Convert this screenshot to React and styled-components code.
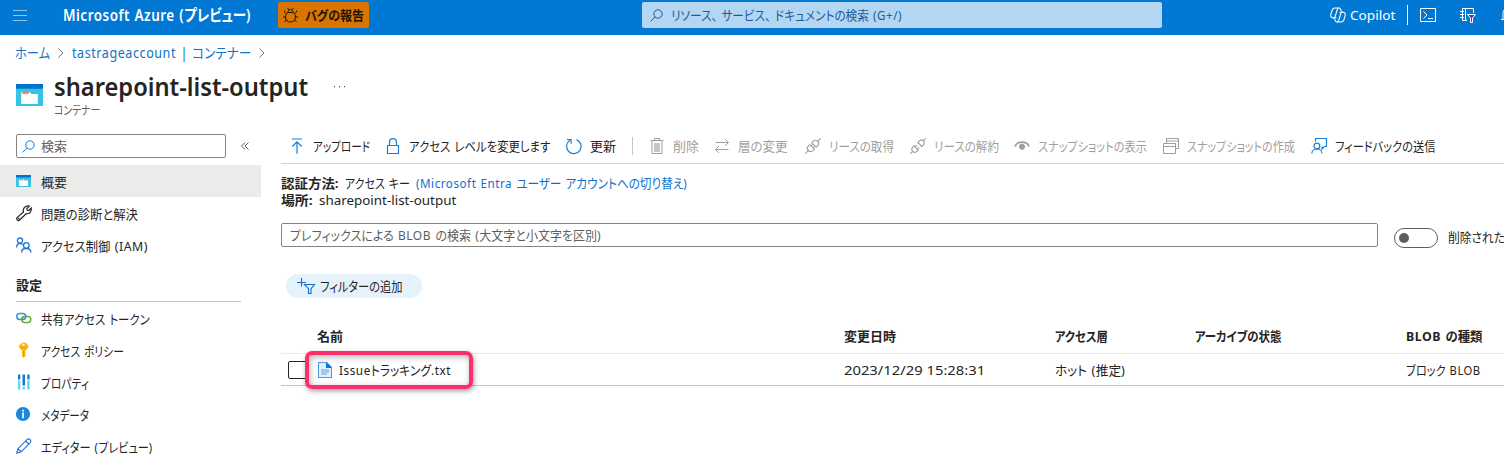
import React, { useLayoutEffect, useRef, useState } from "react";
import styled, { createGlobalStyle } from "styled-components";

const Global = createGlobalStyle`
  * { box-sizing: border-box; }
  body {
    margin: 0;
    background: #fff;
    color: #252423;
    font: 13px/16px "Noto Sans", "Noto Sans CJK JP", sans-serif;
    font-feature-settings: "palt";
    overflow: hidden;
  }
`;

/* Condenses or widens a label to the width reserved for it. */
const FitBox = styled.span`
  display: inline-block;
  flex: none;
  width: ${(p) => p.$w}px;
  white-space: nowrap;
`;
const FitInner = styled.span`
  display: inline-block;
  transform-origin: 0 50%;
`;
/* Latin runs are set a little wider than the kana around them. */
const Latin = styled.span`
  letter-spacing: 0.6px;
  word-spacing: 0.6px;
`;
const LATIN_RUN = /([ -~]+)/;
function Fit({ w, children }) {
  const ref = useRef(null);
  const [scale, setScale] = useState(1);
  useLayoutEffect(() => {
    setScale(w / ref.current.offsetWidth);
  }, [w, children]);
  const runs = children.split(LATIN_RUN).filter(Boolean);
  return (
    <FitBox $w={w}>
      <FitInner ref={ref} style={{ transform: `scaleX(${scale})` }}>
        {runs.length < 2
          ? children
          : runs.map((run, i) => (LATIN_RUN.test(run) ? <Latin key={i}>{run}</Latin> : run))}
      </FitInner>
    </FitBox>
  );
}

const Icon = styled.svg.attrs((p) => ({ fill: "none", stroke: p.stroke || "currentColor" }))`
  display: block;
  flex: none;
  width: ${(p) => p.$w || 16}px;
  height: ${(p) => p.$h || p.$w || 16}px;
  overflow: visible;
`;

const Page = styled.div`
  width: 1504px;
  height: 472px;
  overflow: hidden;
  background: #fff;
`;

/* top bar */
const TopBar = styled.header`
  display: flex;
  height: 35px;
  padding: 2px 0 0 13px;
  background: #0078d4;
  color: #fff;
`;
const TopItem = styled.div`
  display: flex;
  align-items: center;
  flex: none;
  height: 26px;
  margin-left: ${(p) => p.$ml || 0}px;
`;
const Brand = styled(TopItem)`
  font-size: 16px;
  font-weight: 600;
`;
const BugButton = styled.button`
  display: flex;
  align-items: center;
  gap: 7px;
  flex: none;
  width: 91px;
  height: 26px;
  margin-left: 27px;
  padding: 0 0 0 5px;
  border: 0;
  border-radius: 2px;
  background: #d97500;
  color: #201400;
  font: inherit;
  font-weight: 600;
`;
const GlobalSearch = styled.div`
  display: flex;
  align-items: center;
  gap: 8px;
  flex: none;
  width: 520px;
  height: 26px;
  margin-left: 273px;
  padding-left: 8px;
  border-radius: 2px;
  background: #b3d6f2;
  color: #1c5c99;
`;
const TopDivider = styled.div`
  flex: none;
  width: 1px;
  height: 20px;
  margin: 3px 12px 0 12px;
  background: #fff;
`;

/* title area */
const Crumbs = styled.nav`
  display: flex;
  align-items: center;
  height: 36px;
  padding-left: 15px;
  color: #0f73c7;
  font-size: 14px;
`;
const Chevron = styled(Icon)`
  margin: 0 8px;
  color: #76746f;
`;
const TitleRow = styled.div`
  display: flex;
  height: 63px;
  padding-left: 16px;
`;
const TitleIcon = styled.div`
  flex: none;
  padding-top: 13px;
  width: 38px;
`;
const TitleText = styled.div`
  width: 280px;
`;
const Title = styled.h1`
  margin: 0;
  font-size: 25px;
  font-weight: 600;
  line-height: 31px;
`;
const Subtitle = styled.div`
  padding-top: 1px;
  color: #605e5c;
  font-size: 12px;
  line-height: 16px;
`;
const More = styled(Icon)`
  margin-top: 15px;
  color: #484644;
`;

/* body */
const Body = styled.div`
  display: flex;
`;
const Sidebar = styled.aside`
  flex: none;
  width: 261px;
`;
const SideSearchRow = styled.div`
  display: flex;
  align-items: center;
  gap: 15px;
  height: 24px;
  margin: 0 0 7px 16px;
  color: #605e5c;
`;
const SideSearch = styled.div`
  display: flex;
  align-items: center;
  gap: 6px;
  width: 210px;
  height: 24px;
  padding-left: 5px;
  border: 1px solid #85837f;
  border-radius: 2px;
`;
const NavItem = styled.div`
  display: flex;
  align-items: center;
  gap: ${(p) => p.$gap || 9}px;
  height: 32px;
  padding-left: 16px;
  background: ${(p) => (p.$active ? "#edebe9" : "transparent")};
`;
const NavLabel = styled.span`
  padding-top: 2px;
`;
const NavHeading = styled.div`
  width: 225px;
  height: 33px;
  margin: 8px 0 0 16px;
  padding-top: 8px;
  border-bottom: 1px solid #c8c6c4;
  font-weight: 700;
`;
const Main = styled.main`
  flex: none;
  width: 1223px;
  margin-left: 20px;
`;
const Commands = styled.div`
  display: flex;
  align-items: center;
  height: 30px;
  padding-bottom: 6px;
  border-bottom: 1px solid #d2d0ce;
`;
const Command = styled.div`
  display: flex;
  align-items: center;
  gap: 8px;
  flex: none;
  height: 24px;
  margin-left: ${(p) => p.$ml}px;
  color: ${(p) => (p.$disabled ? "#a19f9d" : "#252423")};
`;
const CommandDivider = styled.div`
  width: 1px;
  height: 18px;
  margin-left: 16px;
  background: #c8c6c4;
`;
const Info = styled.div`
  padding-top: 11px;
`;
const InfoRow = styled.div`
  display: flex;
  gap: 6px;
  height: 17px;
  line-height: 17px;
`;
const Strong = styled.span`
  font-weight: 700;
`;
const Link = styled.span`
  color: #0f6fce;
`;
const FilterRow = styled.div`
  display: flex;
  height: 24px;
  margin-top: 14px;
`;
const PrefixInput = styled.div`
  flex: none;
  width: 1097px;
  height: 24px;
  padding: 3px 0 0 8px;
  border: 1px solid #85837f;
  border-radius: 2px;
  color: #605e5c;
`;
const Toggle = styled.div`
  flex: none;
  width: 44px;
  height: 20px;
  margin: 5px 10px 0 16px;
  padding: 4px;
  border: 1px solid #605e5c;
  border-radius: 10px;
`;
const Knob = styled.div`
  width: 10px;
  height: 10px;
  border-radius: 50%;
  background: #605e5c;
`;
const ToggleLabel = styled.div`
  padding-top: 6px;
`;
const AddFilter = styled.div`
  display: flex;
  align-items: center;
  gap: 5px;
  width: 136px;
  height: 24px;
  margin: 27px 0 0 5px;
  padding-left: 11px;
  border-radius: 12px;
  background: #e5f1fb;
`;
const Row = styled.div`
  display: grid;
  grid-template-columns: 563px 211px 140px 211px 98px;
  align-items: center;
  height: ${(p) => p.$h}px;
  border-bottom: 1px solid ${(p) => p.$line};
  padding-bottom: ${(p) => (p.$head ? 2 : 0)}px;
  font-weight: ${(p) => (p.$head ? 700 : 400)};
  margin-top: ${(p) => p.$mt || 0}px;
`;
const NameCell = styled.div`
  position: relative;
  display: flex;
  align-items: center;
  height: 100%;
  padding-left: ${(p) => p.$pl}px;
`;
const Checkbox = styled.span`
  flex: none;
  width: 20px;
  height: 18px;
  margin-right: 10px;
  border: 1px solid #252423;
  border-radius: 2px;
`;
const FileName = styled.span`
  margin-left: 7px;
`;
const Marker = styled.span`
  position: absolute;
  left: 24px;
  top: -3px;
  width: 168px;
  height: 38px;
  border: 4px solid #fb2f6c;
  border-radius: 7px;
  box-shadow: 1px 2px 5px rgba(0, 0, 0, 0.38), inset 1px 2px 6px rgba(0, 0, 0, 0.3);
`;

const SearchIcon = (p) => (
  <Icon $w={13} viewBox="0 0 13 13" {...p}>
    <circle cx="8" cy="5" r="4.2" />
    <path d="M5 8 .7 12.3" />
  </Icon>
);
const ContainerIcon = ({ w, h }) => (
  <Icon $w={w} $h={h} viewBox="0 0 26 22" stroke="none" preserveAspectRatio="none">
    <path fill="#37c2e6" d="M0 4h26v18H0z" />
    <path fill="#0072cf" d="M0 0h26v4.7H0z" />
    <path fill="#fff" d="M5 8h8l2 2h6v10H5z" />
    <path fill="#ef8a45" d="M6 7.4h5.5l1.5 1.4-1.5 1.2H6z" />
  </Icon>
);
const Wrench = () => (
  <Icon viewBox="0 0 16 16" strokeWidth="1.2">
    <path d="M1 12.6 7.5 7c-.8-2.8.6-5.6 4-6.200 .8-.1 1.300 0 1.900 .2L10.800 3.600l.4 1.500 1.600.4 2.400-2.500c.8 3.300-1.500 6.200-5 5.700L3.300 15.200c-1.500 1-3.400-1.100-2.300-2.600z" />
    <circle cx="2.700" cy="13.500" r=".3" />
  </Icon>
);
const People = () => (
  <Icon viewBox="0 0 16 16" stroke="#2275dd" strokeWidth="1.3">
    <circle cx="4" cy="3.600" r="2.600" />
    <path d="M.5 10.500C.6 8 2 6.500 4 6.500c1.200 0 2 .4 2.700 1M5.500 15.500c.1-2.600 1.700-4 4.200-4h1c2.500 0 4.100 1.600 4.300 4" />
    <circle cx="10.300" cy="8.500" r="2.800" />
  </Icon>
);
const Chain = () => (
  <Icon viewBox="0 0 16 16" strokeWidth="1.500">
    <rect x="5.800" y="6.600" width="9" height="5.800" rx="2.900" stroke="#6bb13a" />
    <rect x=".8" y="3.600" width="9" height="5.800" rx="2.900" stroke="#3a8fdd" />
    <path d="M5.900 9.400C6 8 7 6.700 8.600 6.600" stroke="#6bb13a" />
  </Icon>
);
const Key = () => (
  <Icon viewBox="0 0 16 16" stroke="none">
    <path fill="#fcb813" fillRule="evenodd" d="M5 1.800 6.500.5h3L11 1.800l1.300 1.700v2L11 7.300 9.500 8.500v5.700L7.500 15.800 6 14.200V8.500L4.500 7.300 2.900 5.500v-2zM7.500 1.600a1.100 1.100 0 1 0 .01 0z" />
    <path fill="#e89b08" d="M4.800 5h5.500v.9H4.800zM7 9h.8v5H7z" />
  </Icon>
);
const Bars = () => (
  <Icon viewBox="0 0 16 16" stroke="none">
    <path fill="#1479cf" d="M2 .5h2.300v5H2zM6.500.5H9v11H6.500zM11.300.5h2.300v5h-2.300z" />
    <path fill="#58d9f2" d="M2 6.500h2.300v9H2zM6.500 12.700H9v2.800H6.500zM11.300 6.500h2.300v9h-2.300z" />
  </Icon>
);
const InfoIcon = () => (
  <Icon viewBox="0 0 16 16" stroke="none">
    <circle cx="7" cy="8" r="7.100" fill="#1e87dc" />
    <path fill="#fff" d="M6.200 3.700h1.700v1.700H6.200zM6.200 6.500h1.700v5.700H6.200z" />
  </Icon>
);
const Pencil = () => (
  <Icon viewBox="0 0 16 16" stroke="#2971d6" strokeWidth="1.200">
    <path d="M.8 15.200 1.900 10.700 11 1.600c2-2 5 .9 3.300 3L5.200 13.800zM9.700 3l3.300 3.200M2 10.800l3.200 3" />
  </Icon>
);
const FileIcon = () => (
  <Icon $w={14} $h={16} viewBox="0 0 14 16" stroke="none">
    <path fill="#4a9be8" d="M0 0h9l5 5v11H0z" />
    <path fill="#deeffd" d="M1 1h7v5h5v9H1z" />
    <path fill="#1272cf" d="M8 0l6 6H8z" />
    <path fill="#5ea3e5" d="M3 7.500h8v1H3zM3 9.500h8v1H3zM3 11.500h6v1H3z" />
  </Icon>
);

const UploadIcon = () => (
  <Icon viewBox="0 0 16 16" stroke="#1680d8" strokeWidth="1.200">
    <path d="M3 1h10M8 15.800V4M3.300 8.500 8 3.800l4.700 4.700" />
  </Icon>
);
const Lock = () => (
  <Icon viewBox="0 0 16 16" stroke="#1680d8" strokeWidth="1.200">
    <path d="M2.500 7.500h11v8h-11zM4.500 7.500V3.800c0-4.200 7-4.200 7 0v3.700" />
  </Icon>
);
const Refresh = () => (
  <Icon viewBox="0 0 16 16" stroke="#1680d8" strokeWidth="1.200">
    <path d="M10.500 1.600A7.300 7.300 0 1 1 4 2.200M.8 1.500h4.300v4.300" />
  </Icon>
);
const Trash = () => (
  <Icon viewBox="0 0 16 16">
    <path d="M1.500 2.500h13M5.500 2.500v-2h5v2M3 3v12.500h10V3" />
    <path d="M5.500 5.500h5v8h-5z" fill="#c8c6c4" stroke="#c8c6c4" />
  </Icon>
);
const Swap = () => (
  <Icon viewBox="0 0 16 16">
    <path d="M1.500 4.500h13M11 1l3.500 3.500L11 8M14.500 11.500h-13M5 8l-3.500 3.500L5 15" />
  </Icon>
);
const Plug = ({ apart }) => (
  <Icon viewBox="0 0 16 16" strokeWidth="1.100">
    {apart ? (
      <>
        <path d="m.3 15.700 2.400-2.400M2.500 9.300 4 7.800l4.200 4.200-1.500 1.500C3.900 15.900.3 12 2.500 9.300zM5 9l1.800-1.800M7.400 11.200l1.700-1.700" />
        <path d="m15.700.3-2.300 2.400M8 4.500l3.800 4 1.700-1.700c2.200-2.700-1.200-6.300-3.900-4.100z" />
      </>
    ) : (
      <>
        <path d="m.3 15.700 3-3M3 8.300l1.800-1.600 4.600 4.500-1.500 1.500c-3 2.600-7.400-1.300-4.900-4.400zM5.800 8.300l1.900-1.900M7.700 10.300l2-2" />
        <path d="m15.700.3-3 3M6.700 4.700l4.600 4.600 1.500-1.600c2.500-3-1.400-7-4.400-4.600z" />
      </>
    )}
  </Icon>
);
const Eye = () => (
  <Icon viewBox="0 0 16 16">
    <path d="M1 8.500C3 2.700 13 2.700 15 8.500" strokeWidth="1.800" />
    <circle cx="8" cy="8.700" r="2.600" fill="currentColor" />
  </Icon>
);
const Windows = () => (
  <Icon viewBox="0 0 16 16">
    <path d="M.5 5.500h12v10H.5zM.5 8.500h12M3.500 5.500v-5h12v10h-3M3.500 3h12" />
  </Icon>
);
const Feedback = () => (
  <Icon viewBox="0 0 16 16" stroke="#1680d8" strokeWidth="1.200">
    <path d="M4.500 3.500v-3h11v8h-2l-2.500 2.500V8.500M.8 15.500c0-6 10.200-6 10.200 0" />
    <circle cx="5.900" cy="8" r="2.900" />
  </Icon>
);

const Bug = () => (
  <Icon $w={15} $h={16} viewBox="0 0 15 16">
    <path d="M4.800 5.500h5.400c1.600 1.200 2.300 2.700 2.300 4.500 0 3-2 5-5 5s-5-2-5-5c0-1.800.7-3.300 2.300-4.500zM5 5.300C5 1.800 10 1.800 10 5.300M4.500.8l1.300 2M10.500.8l-1.300 2M3.500 6.500 1.400 5V3.500M11.500 6.500 13.600 5V3.500M2.500 10H0M12.500 10H15M3.500 12.800 1.500 15M11.500 12.800l2 2.200" />
  </Icon>
);
const CopilotIcon = () => (
  <Icon viewBox="0 0 16 16" strokeWidth="1.100">
    <path d="M6.500 10.800H3C.8 10.800.4 9 .9 7.200L2.200 3C2.800 1.300 3.500 1 5 1h4c1 0 1.500.6 1.800 1.600l.3 1.400M9.500 5.200H13c2.200 0 2.600 1.800 2.100 3.600L13.800 13c-.6 1.700-1.300 2-2.800 2H7c-1 0-1.500-.6-1.800-1.600L4.900 12" />
    <path d="M9 1C7.900 1 7.600 1.500 7.200 2.800L5 10c-.4 1-.8 1.500-1.700 1.500M7 15c1.100 0 1.400-.5 1.800-1.800L11 6c.4-1 .8-1.500 1.700-1.500" />
  </Icon>
);

const TOP_NAV = [
  [<ContainerIcon w={15} h={12} />, "概要", 26, 10],
  [<Wrench />, "問題の診断と解決", 97, 9],
  [<People />, "アクセス制御 (IAM)", 107, 9],
];
const SETTINGS = [
  [<Chain />, "共有アクセス トークン", 109],
  [<Key />, "アクセス ポリシー", 83],
  [<Bars />, "プロパティ", 48],
  [<InfoIcon />, "メタデータ", 48],
  [<Pencil />, "エディター (プレビュー)", 112],
];

export default function App() {
  return (
    <Page>
      <Global />
      <TopBar>
        <TopItem>
          <Icon $w={14} $h={11} viewBox="0 0 14 11" stroke="#8fc4ee">
            <path d="M0 .5h14M0 5.500h14M0 10.500h14" />
          </Icon>
        </TopItem>
        <Brand $ml={36}><Fit w={188}>Microsoft Azure (プレビュー)</Fit></Brand>
        <BugButton><Bug /><Fit w={59}>バグの報告</Fit></BugButton>
        <GlobalSearch><SearchIcon /><Fit w={231}>リソース、 サービス、 ドキュメントの検索 (G+/)</Fit></GlobalSearch>
        <TopItem $ml={168}><CopilotIcon /></TopItem>
        <TopItem $ml={4}><Fit w={45}>Copilot</Fit></TopItem>
        <TopDivider />
        <TopItem>
          <Icon viewBox="0 0 16 16">
            <path d="M.5 1.500h15v13H.5zM3.500 4.500 7 8l-3.500 3.500M8 11.500h5" />
          </Icon>
        </TopItem>
        <TopItem $ml={24}>
          <Icon viewBox="0 0 16 16">
            <path d="M7 13.500H2.500V1.500h11V6M5.500 1.500v12M0 4.500h4M0 7.500h4M0 10.500h4" />
            <path d="M7.500 7.500h8l-3 3.500v4.500h-2V11z" fill="#6b2fa0" />
          </Icon>
        </TopItem>
        <TopItem $ml={25}>
          <Icon viewBox="0 0 16 16"><path d="M0 12.500h14M2 12V6c0-6 10-6 10 0v6" /></Icon>
        </TopItem>
      </TopBar>

      <Crumbs>
        <Fit w={35}>ホーム</Fit>
        <Chevron $w={6} $h={10} viewBox="0 0 6 10"><path d="m.5.500 4.500 4.500L.5 9.500" /></Chevron>
        <Fit w={179}>tastrageaccount | コンテナー</Fit>
        <Chevron $w={6} $h={10} viewBox="0 0 6 10"><path d="m.5.500 4.500 4.500L.5 9.500" /></Chevron>
      </Crumbs>
      <TitleRow>
        <TitleIcon><ContainerIcon w={27} h={22} /></TitleIcon>
        <TitleText>
          <Title><Fit w={254}>sharepoint-list-output</Fit></Title>
          <Subtitle><Fit w={46}>コンテナー</Fit></Subtitle>
        </TitleText>
        <More $w={11} $h={2} viewBox="0 0 11 2" stroke="none">
          <path fill="currentColor" d="M0 0h1v1.200H0zM5 0h1v1.200H5zM10 0h1v1.200h-1z" />
        </More>
      </TitleRow>

      <Body>
        <Sidebar>
          <SideSearchRow>
            <SideSearch><SearchIcon stroke="#1680d8" /><Fit w={26}>検索</Fit></SideSearch>
            <Icon $w={8} $h={8} viewBox="0 0 8 8"><path d="M4 .5.5 4 4 7.500M7.500.5 4 4l3.500 3.500" /></Icon>
          </SideSearchRow>
          {TOP_NAV.map(([icon, text, w, gap], i) => (
            <NavItem key={text} $active={i === 0} $gap={gap}>
              {icon}
              <NavLabel><Fit w={w}>{text}</Fit></NavLabel>
            </NavItem>
          ))}
          <NavHeading><Fit w={26}>設定</Fit></NavHeading>
          {SETTINGS.map(([icon, text, w]) => (
            <NavItem key={text}>
              {icon}
              <NavLabel><Fit w={w}>{text}</Fit></NavLabel>
            </NavItem>
          ))}
        </Sidebar>
        <Main>
          <Commands>
            <Command $ml={8}><UploadIcon /><Fit w={57}>アップロード</Fit></Command>
            <Command $ml={15}><Lock /><Fit w={141}>アクセス レベルを変更します</Fit></Command>
            <Command $ml={16}><Refresh /><Fit w={26}>更新</Fit></Command>
            <CommandDivider />
            <Command $disabled $ml={16}><Trash /><Fit w={26}>削除</Fit></Command>
            <Command $disabled $ml={15}><Swap /><Fit w={50}>層の変更</Fit></Command>
            <Command $disabled $ml={17}><Plug /><Fit w={65}>リースの取得</Fit></Command>
            <Command $disabled $ml={16}><Plug apart /><Fit w={65}>リースの解約</Fit></Command>
            <Command $disabled $ml={15}><Eye /><Fit w={109}>スナップショットの表示</Fit></Command>
            <Command $disabled $ml={16}><Windows /><Fit w={108}>スナップショットの作成</Fit></Command>
            <Command $ml={16}><Feedback /><Fit w={100}>フィードバックの送信</Fit></Command>
          </Commands>
          <Info>
            <InfoRow>
              <Strong><Fit w={58}>認証方法:</Fit></Strong>
              <Fit w={65}>アクセス キー</Fit>
              <Link><Fit w={271}>(Microsoft Entra ユーザー アカウントへの切り替え)</Fit></Link>
            </InfoRow>
            <InfoRow>
              <Strong><Fit w={32}>場所:</Fit></Strong>
              <Fit w={137}>sharepoint-list-output</Fit>
            </InfoRow>
          </Info>
          <FilterRow>
            <PrefixInput><Fit w={311}>プレフィックスによる BLOB の検索 (大文字と小文字を区別)</Fit></PrefixInput>
            <Toggle><Knob /></Toggle>
            <ToggleLabel><Fit w={57}>削除された</Fit></ToggleLabel>
          </FilterRow>
          <AddFilter>
            <Icon $w={18} $h={16} viewBox="0 0 18 16" stroke="#1269c7" strokeWidth="1.100">
              <path d="M4.500 0v8.500M0 4.500h9M7.500 6.500h10L14 10.700v4.800h-2.500v-4.800z" />
            </Icon>
            <Fit w={83}>フィルターの追加</Fit>
          </AddFilter>
          <Row $head $h={34} $mt={22} $line="#edebe9">
            <NameCell $pl={36}><Fit w={26}>名前</Fit></NameCell>
            <Fit w={52}>変更日時</Fit>
            <Fit w={53}>アクセス層</Fit>
            <Fit w={86}>アーカイブの状態</Fit>
            <Fit w={76}>BLOB の種類</Fit>
          </Row>
          <Row $h={32} $line="#c8c6c4">
            <NameCell $pl={7}>
              <Checkbox />
              <FileIcon />
              <FileName><Fit w={112}>Issueトラッキング.txt</Fit></FileName>
              <Marker />
            </NameCell>
            <Fit w={141}>2023/12/29 15:28:31</Fit>
            <Fit w={70}>ホット (推定)</Fit>
            <span />
            <Fit w={75}>ブロック BLOB</Fit>
          </Row>
        </Main>
      </Body>
    </Page>
  );
}
